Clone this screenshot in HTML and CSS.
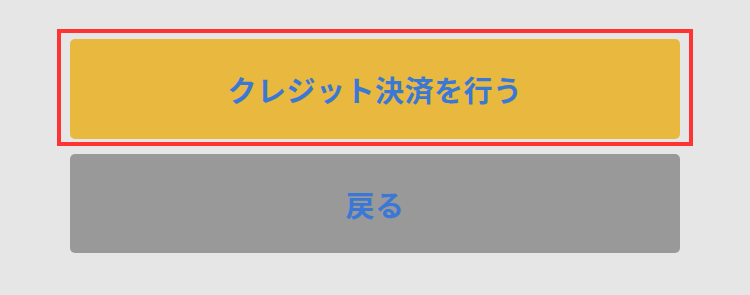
FILE: index.html
```html
<!DOCTYPE html>
<html lang="ja">
<head>
<meta charset="utf-8">
<title>決済</title>
<link rel="stylesheet" href="styles.css">
</head>
<body>
<div class="page">
  <div class="focus-frame">
    <button class="btn btn-primary" type="button">クレジット決済を行う</button>
  </div>
  <button class="btn btn-back" type="button">戻る</button>
</div>
</body>
</html>
```

FILE: styles.css
```css
html, body {
  margin: 0;
  padding: 0;
  background: #e6e6e6;
}
body {
  width: 750px;
  height: 295px;
  overflow: hidden;
  font-family: "Noto Sans CJK JP", "Noto Sans", sans-serif;
}
.page {
  display: flex;
  flex-direction: column;
  align-items: flex-start;
  padding: 29px 0 0 57px;
}
.focus-frame {
  width: 610px;
  border: 4px solid #fe3434;
  padding: 6px 9px 3px 9px;
  box-sizing: content-box;
  display: flex;
}
.focus-frame .btn {
  width: 100%;
}
.btn {
  display: flex;
  align-items: center;
  justify-content: center;
  height: 100px;
  border: none;
  border-radius: 5px;
  margin: 0;
  padding: 0;
  font-family: "Noto Sans CJK JP", "Noto Sans", sans-serif;
  font-size: 29px;
  font-weight: 700;
  color: #3b78d6;
  letter-spacing: 0.5px;
}
.btn-primary {
  background: #e8b93e;
}
.btn-back {
  width: 610px;
  height: 99px;
  margin: 8px 0 0 13px;
  background: #999999;
}
```
